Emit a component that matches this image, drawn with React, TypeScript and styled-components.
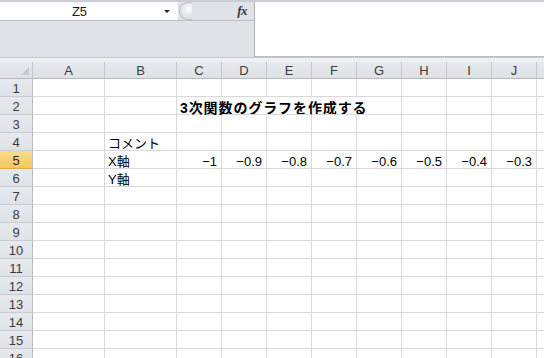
import React from 'react'
import styled, { createGlobalStyle } from 'styled-components'

const COLS = [
    { key: 'A', width: 72 },
    { key: 'B', width: 72 },
    { key: 'C', width: 45 },
    { key: 'D', width: 45 },
    { key: 'E', width: 45 },
    { key: 'F', width: 45 },
    { key: 'G', width: 45 },
    { key: 'H', width: 45 },
    { key: 'I', width: 45 },
    { key: 'J', width: 45 },
    { key: 'K', width: 45 },
]

const ROW_COUNT = 16
const ACTIVE_ROW = 5

type CellData = { text: string; align?: 'left' | 'right'; bold?: boolean }

const cells: Record<string, CellData> = {
    C2: { text: '3次関数のグラフを作成する', bold: true },
    B4: { text: 'コメント' },
    B5: { text: 'X軸' },
    B6: { text: 'Y軸' },
    C5: { text: '−1', align: 'right' },
    D5: { text: '−0.9', align: 'right' },
    E5: { text: '−0.8', align: 'right' },
    F5: { text: '−0.7', align: 'right' },
    G5: { text: '−0.6', align: 'right' },
    H5: { text: '−0.5', align: 'right' },
    I5: { text: '−0.4', align: 'right' },
    J5: { text: '−0.3', align: 'right' },
}

// cells whose right grid line is covered by overflowing text
const hiddenRight = new Set(['C2', 'D2', 'E2', 'F2'])

export default function App() {
    return (
        <>
            <GlobalStyle />
            <Window>
                <FormulaArea>
                    <LeftPanel>
                        <NameRow>
                            <NameBox>Z5</NameBox>
                            <DropArrow />
                            <Bump />
                            <FxLabel>fx</FxLabel>
                        </NameRow>
                    </LeftPanel>
                    <FormulaInput />
                </FormulaArea>
                <Strip />
                <Sheet>
                    <GridTable style={{ gridTemplateColumns: `33px ${COLS.map(c => c.width + 'px').join(' ')}` }}>
                        <Corner>
                            <CornerMark />
                        </Corner>
                        {COLS.map(c => (
                            <ColHead key={c.key}>{c.key}</ColHead>
                        ))}
                        {Array.from({ length: ROW_COUNT }, (_, i) => i + 1).map(r => (
                            <React.Fragment key={r}>
                                <RowHead active={r === ACTIVE_ROW}>{r}</RowHead>
                                {COLS.map(c => {
                                    const id = c.key + r
                                    const data = cells[id]
                                    return (
                                        <Cell key={id} hideRight={hiddenRight.has(id)} align={data?.align ?? 'left'}>
                                            {data && <CellText bold={data.bold}>{data.text}</CellText>}
                                        </Cell>
                                    )
                                })}
                            </React.Fragment>
                        ))}
                    </GridTable>
                </Sheet>
            </Window>
        </>
    )
}

const GlobalStyle = createGlobalStyle`
    html, body {
        margin: 0;
        padding: 0;
        background: #ffffff;
        overflow: hidden;
    }
    body {
        font-family: "Liberation Sans", "Noto Sans CJK JP", sans-serif;
        -webkit-font-smoothing: antialiased;
    }
`

const Window = styled.div`
    width: 544px;
    height: 358px;
    overflow: hidden;
    background: #ffffff;
    display: flex;
    flex-direction: column;
`

const FormulaArea = styled.div`
    display: flex;
    height: 57px;
    flex-shrink: 0;
    border-top: 2px solid #c9ced6;
    box-sizing: border-box;
`

const LeftPanel = styled.div`
    width: 255px;
    background: #dfe2e7;
    border-right: 1px solid #a9b0b9;
    box-sizing: border-box;
`

const NameRow = styled.div`
    display: flex;
    align-items: center;
    height: 18px;
    background: #dfe2e7;
    border-bottom: 1px solid #b9bfc7;
`

const NameBox = styled.div`
    width: 159px;
    height: 100%;
    background: #ffffff;
    display: flex;
    align-items: center;
    justify-content: center;
    font-size: 13px;
    color: #1a1a1a;
`

const DropArrow = styled.div`
    width: 19px;
    height: 100%;
    background: #ffffff;
    display: flex;
    align-items: center;
    justify-content: center;
    &::after {
        content: '';
        border-left: 3px solid transparent;
        border-right: 3px solid transparent;
        border-top: 3px solid #222222;
        margin-right: 4px;
    }
`

const Bump = styled.div`
    width: 12px;
    height: 16px;
    margin-left: 1px;
    border: 1px solid #b8bec6;
    border-right: none;
    border-radius: 9px 0 0 9px;
    background: radial-gradient(circle at 70% 40%, #ffffff 0%, #e6e8ec 45%, #d4d8de 100%);
`

const FxLabel = styled.div`
    margin-left: auto;
    margin-right: 7px;
    font-family: "Liberation Serif", "DejaVu Serif", serif;
    font-style: italic;
    font-weight: bold;
    font-size: 13px;
    color: #3a3a3a;
    letter-spacing: -0.5px;
`

const FormulaInput = styled.div`
    flex: 1;
    background: #ffffff;
    border-bottom: 1px solid #b9bfc7;
`

const Strip = styled.div`
    height: 5px;
    flex-shrink: 0;
    background: #eef0f3;
    border-top: 1px solid #c3c8cf;
    box-sizing: border-box;
`

const Sheet = styled.div`
    flex: 1;
    overflow: hidden;
    background: #ffffff;
`

const GridTable = styled.div`
    display: grid;
    grid-template-rows: 17px;
    grid-auto-rows: 18px;
`

const HeadBase = styled.div`
    box-sizing: border-box;
    display: flex;
    align-items: center;
    justify-content: center;
    font-family: "Liberation Sans", sans-serif;
    font-size: 13px;
    color: #3c3c3c;
    background: linear-gradient(#e7eaee, #dde1e6);
    border-right: 1px solid #c3c8ce;
    border-bottom: 1px solid #b5bac1;
`

const Corner = styled(HeadBase)`
    position: relative;
`

const CornerMark = styled.div`
    position: absolute;
    right: 3px;
    bottom: 3px;
    width: 0;
    height: 0;
    border-left: 8px solid transparent;
    border-bottom: 8px solid #c7cbd1;
`

const ColHead = styled(HeadBase)`
    padding-top: 1px;
`

const RowHead = styled(HeadBase)<{ active?: boolean }>`
    padding-top: 2px;
    border-right: 1px solid #b5bac1;
    border-bottom: 1px solid ${p => (p.active ? '#e9a94a' : '#c9cdd3')};
    background: ${p => (p.active ? 'linear-gradient(#fbdb8b, #f4c75f)' : 'linear-gradient(#e6e9ed, #dfe2e7)')};
    color: ${p => (p.active ? '#2a2a2a' : '#3c3c3c')};
`

const Cell = styled.div<{ hideRight?: boolean; align: 'left' | 'right' }>`
    box-sizing: border-box;
    border-right: 1px solid ${p => (p.hideRight ? 'transparent' : '#d7d9dc')};
    border-bottom: 1px solid #d7d9dc;
    display: flex;
    align-items: flex-end;
    justify-content: ${p => (p.align === 'right' ? 'flex-end' : 'flex-start')};
    padding: 0 4px 0 3px;
    white-space: nowrap;
    overflow: visible;
`

const CellText = styled.span<{ bold?: boolean }>`
    font-family: "Liberation Sans", "Noto Sans CJK JP", sans-serif;
    font-size: ${p => (p.bold ? '14px' : '13px')};
    line-height: 13px;
    color: #000000;
    font-weight: ${p => (p.bold ? 'bold' : 'normal')};
    letter-spacing: ${p => (p.bold ? '0.9px' : '0')};
    margin-bottom: ${p => (p.bold ? '-1px' : '0')};
`
